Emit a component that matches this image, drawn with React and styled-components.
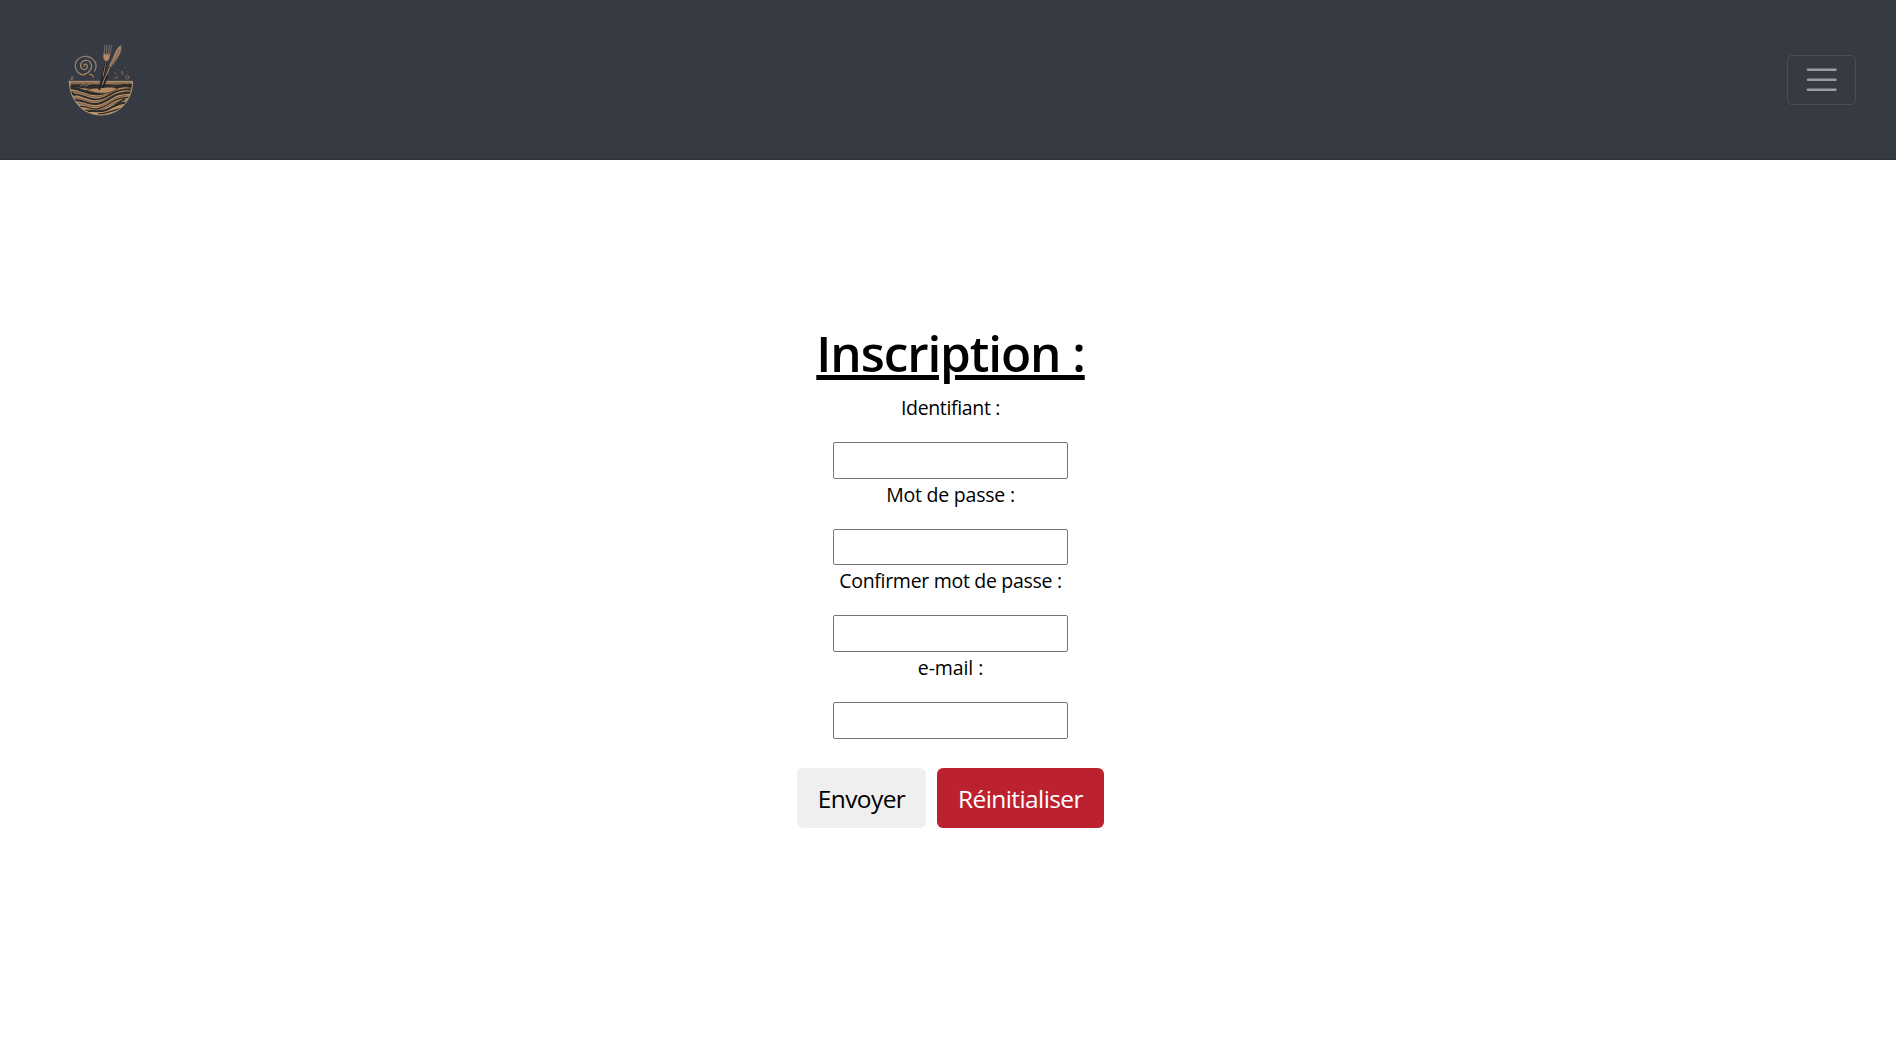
import React from "react";
import styled, { createGlobalStyle } from "styled-components";

const GlobalStyle = createGlobalStyle`
  *, *::before, *::after { box-sizing: border-box; }
  body {
    margin: 0;
    background: #fff;
    color: #000;
    font-family: "Open Sans", "Noto Sans", sans-serif;
  }
`;

const Navbar = styled.header`
  display: flex;
  align-items: center;
  justify-content: space-between;
  height: 160px;
  padding: 0 40px 0 50px;
  background: #363a42;
  border-bottom: 1px solid #2f3339;
`;

const Brand = styled.a`
  display: block;
  width: 100px;
  height: 100px;
  svg { display: block; width: 100%; height: 100%; }
`;

const Toggler = styled.button`
  display: flex;
  align-items: center;
  justify-content: center;
  width: 69px;
  height: 50px;
  padding: 0;
  background: transparent;
  border: 1px solid rgba(255, 255, 255, 0.1);
  border-radius: 5px;
  svg { display: block; width: 37.5px; height: 37.5px; }
`;

const Form = styled.form`
  display: flex;
  flex-direction: column;
  align-items: center;
  padding: 163px 0 0 5px;
`;

const Title = styled.h1`
  margin: 0 0 9px;
  font-size: 49.5px;
  font-weight: 600;
  line-height: 60px;
  letter-spacing: -1.1px;
  white-space: pre;
  text-decoration: underline;
  text-decoration-thickness: 5px;
  text-underline-offset: 3px;
`;

const Field = styled.div`
  display: flex;
  flex-direction: column;
  align-items: center;
  height: 86.67px;
`;

const Label = styled.label`
  padding-top: 1px;
  margin-bottom: 19px;
  font-size: 19.5px;
  line-height: 30px;
  letter-spacing: ${(p) => p.$tracking}px;
  white-space: nowrap;
`;

const Input = styled.input`
  width: 235px;
  height: 36.67px;
  border: 1px solid #767676;
  border-radius: 2px;
  background: #fff;
  outline: none;
  font: inherit;
`;

const Actions = styled.div`
  display: flex;
  gap: 11px;
  margin-top: 29.33px;
`;

const Button = styled.button`
  width: ${(p) => p.$width}px;
  height: 60px;
  padding: 2px 0 0;
  border: 0;
  border-radius: 6px;
  background: ${(p) => (p.$danger ? "#bb212f" : "#efefef")};
  color: ${(p) => (p.$danger ? "#fff" : "#000")};
  font-family: inherit;
  font-size: 24.5px;
  line-height: 38px;
  letter-spacing: ${(p) => p.$tracking}px;
`;

const FIELDS = [
  { id: "login", label: "Identifiant :", type: "text", tracking: -0.35 },
  { id: "password", label: "Mot de passe :", type: "password", tracking: -0.22 },
  { id: "confirm", label: "Confirmer mot de passe :", type: "password", tracking: -0.3 },
  { id: "email", label: "e-mail :", type: "email", tracking: -0.1 },
];

function BowlLogo() {
  return (
    <svg viewBox="0 0 300 300" fill="none" strokeLinecap="round" aria-hidden="true">
      <defs>
        <linearGradient id="wood" x1="60" y1="150" x2="240" y2="250" gradientUnits="userSpaceOnUse">
          <stop offset="0" stopColor="#9b8269" />
          <stop offset="0.5" stopColor="#c09469" />
          <stop offset="1" stopColor="#b18a5f" />
        </linearGradient>
        <clipPath id="bowl">
          <path d="M58 154H248C247 213 207 255 153 255S59 213 58 154Z" />
        </clipPath>
      </defs>
      <g stroke="#9a8472" strokeWidth="3.6">
        <path d="M103 108c-4-7 8-8 9 0c1 9-9 14-16 8c-9-9-3-23 9-25c16-2 24 14 17 27c-4 7-9 12-16 14" stroke="#a5876e" />
        <path d="M90 131C74 124 70 99 86 86c12-11 33-9 44 3c9 9 10 22 4 34" />
        <path d="M119 133c6 0 12 4 11 9M90 131c6 5 11 5 16 1" stroke="#b08159" />
        <path d="M106 79c12-1 25 5 29 19" stroke="#77716c" strokeWidth="2" />
      </g>
      <path d="M64 149c-1-6 0-9 3-10s3 4 1 9" stroke="#9b7451" strokeWidth="3" />
      <g clipPath="url(#bowl)">
        <path d="M55 150H251V260H55Z" fill="url(#wood)" />
        <path d="M62 163h179l-2 8c-28-6-60-3-83 9c-27-1-64-7-94-9Z" fill="#2b2c2d" />
        <g stroke="#2a2a2a">
          <path d="M58 173c31 1 49 18 81 19c40 1 51-31 105-23" strokeWidth="8" />
          <path d="M62 193c32-5 44 16 76 15c42-2 48-34 106-29" strokeWidth="5" />
          <path d="M71 212c25-6 42 13 68 10c39-5 46-36 102-34" strokeWidth="6" />
          <path d="M86 230c20-5 38 11 58 6c36-9 48-35 92-34" strokeWidth="4" />
          <path d="M106 244c22-4 41 4 63-4c24-10 36-23 60-22" strokeWidth="6" />
          <path d="M146 252c20 1 39-9 64-16" strokeWidth="4" />
          <path d="M193 169c18-6 32-2 53-5" strokeWidth="6" />
          <path d="M59 184c5 2 10 6 14 11M196 225l27-18" strokeWidth="6" />
        </g>
        <g stroke="#4f3f30" strokeWidth="2">
          <path d="M62 184c40 2 57 23 91 15c30-7 48-23 89-24" />
          <path d="M73 204c29 0 45 17 73 10c34-8 48-31 94-29" />
          <path d="M85 221c22-1 37 14 65 7c28-8 43-31 80-31" />
          <path d="M106 239c25 2 45 1 69-10c21-10 32-19 51-19" />
        </g>
        <path d="M109 181c18-9 31-5 48-8c21-4 32 0 48 3c-20 9-28 14-49 14c-22 0-29-7-47-9Z" fill="#b38c65" stroke="#3a3029" strokeWidth="2" />
        <path d="M92 168c9-5 16-7 24-9M105 169l15-8M190 162c14-1 24 2 36-3" stroke="#98765a" strokeWidth="3" />
      </g>
      <path d="M58 154H248C247 213 207 255 153 255S59 213 58 154Z" stroke="#b09375" strokeWidth="3" />
      <path d="M65 159H242" stroke="#44352c" strokeWidth="2" />
      <g>
        <path d="M166 92L150 168h7L171 93Z" fill="#98785e" stroke="#202123" strokeWidth="3" />
        <path d="M161 72c-2 9 0 20 7 21s11-9 12-19Z" fill="#b98a63" stroke="#806e60" strokeWidth="2" />
        <path d="M165 46l-3 27M171 46l-2 27M178 46l-3 27M185 47l-6 27" stroke="#897c72" strokeWidth="2.3" />
        <path d="M213 46c5 12-3 29-13 43c-7 11-13 15-17 22L160 166h-8l26-58c3-9 7-15 11-25c6-15 13-32 24-37Z" fill="#a98362" stroke="#35332f" strokeWidth="3" />
        <path d="M211 47c-11 7-15 22-21 35c-5 11-8 16-12 25" stroke="#a99a8a" strokeWidth="2" />
        <path d="M213 48c3 12-5 27-13 39c-7 10-12 15-16 22" stroke="#958675" strokeWidth="2" />
        <path d="M207 60c-5 15-13 30-21 44" stroke="#5a4a3d" strokeWidth="2" />
        <path d="M148 178l10-38M159 171l13-34" stroke="#222326" strokeWidth="6" />
      </g>
      <g stroke="#92705a" strokeWidth="3">
        <circle cx="232" cy="142" r="5" strokeWidth="2.5" />
        <path d="M213 126c5-5 8 2 3 9M202 139l-4 7M195 128l3 3M191 101l2 1M205 119l1 1M192 144l1 1" />
        <path d="M225 113l1 1M231 125l1 1M141 94v1M138 62v1M113 74l1 1" stroke="#765a4c" />
      </g>
    </svg>
  );
}

export default function App() {
  return (
    <>
      <GlobalStyle />
      <Navbar>
        <Brand><BowlLogo /></Brand>
        <Toggler type="button" aria-label="Menu">
          <svg viewBox="0 0 30 30">
            <path d="M4 7h22M4 15h22M4 23h22" stroke="rgba(255,255,255,.5)" strokeWidth="2" strokeLinecap="round" />
          </svg>
        </Toggler>
      </Navbar>
      <Form>
        <Title>Inscription :</Title>
        {FIELDS.map((f) => (
          <Field key={f.id}>
            <Label htmlFor={f.id} $tracking={f.tracking}>{f.label}</Label>
            <Input id={f.id} type={f.type} />
          </Field>
        ))}
        <Actions>
          <Button type="button" $width={129} $tracking={-0.6}>Envoyer</Button>
          <Button type="reset" $danger $width={167} $tracking={-0.6}>Réinitialiser</Button>
        </Actions>
      </Form>
    </>
  );
}
